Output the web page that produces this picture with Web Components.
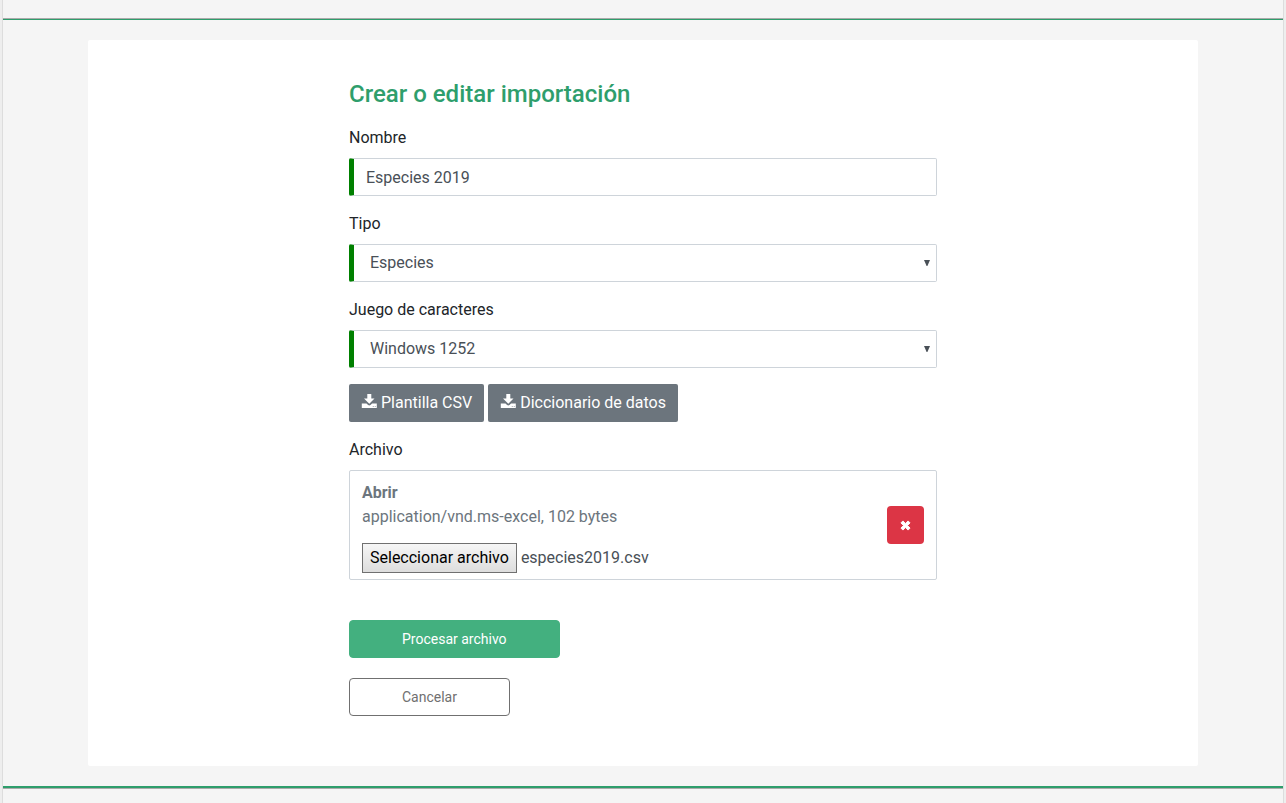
<!DOCTYPE html>
<html lang="es">
<head>
<meta charset="utf-8">
<meta name="viewport" content="width=device-width, initial-scale=1">
<title>Crear o editar importación</title>
<style>
  :root {
    --primary: #2e9e6c;
    --primary-button: #43b07f;
    --secondary: #6c757d;
    --danger: #dc3545;
    --border: #ced4da;
    --required: #008000;
    --text: #212529;
    --text-input: #495057;
  }
  body {
    margin: 0;
    background: #eeeeee;
    color: var(--text);
    font: 400 16px/24px Roboto, "Liberation Sans", sans-serif;
  }
</style>
</head>
<body>
<page-frame>
  <import-card heading="Crear o editar importación">
    <text-field label="Nombre" value="Especies 2019"></text-field>
    <select-field label="Tipo" options="Especies,Registros"></select-field>
    <select-field label="Juego de caracteres" options="Windows 1252,UTF-8"></select-field>
    <download-links>
      <download-link href="#plantilla">Plantilla CSV</download-link>
      <download-link href="#diccionario">Diccionario de datos</download-link>
    </download-links>
    <file-field label="Archivo" filename="especies2019.csv" info="application/vnd.ms-excel, 102 bytes"></file-field>
    <form-actions></form-actions>
  </import-card>
</page-frame>

<script>
const fieldStyles = `
  :host {
    display: block;
    margin-bottom: 16px;
  }
  label.title {
    display: block;
    margin-bottom: 8px;
  }
  input.control, select {
    display: block;
    box-sizing: border-box;
    width: 100%;
    height: 38px;
    padding: 6px 12px;
    border: 1px solid var(--border);
    border-left: 5px solid var(--required);
    border-radius: 2px;
    background: #fff;
    color: var(--text-input);
    font: inherit;
  }
  input.control:focus, select:focus {
    outline: none;
    border-color: var(--primary);
  }
`;

class PageFrame extends HTMLElement {
  constructor() {
    super();
    this.attachShadow({ mode: 'open' });
  }

  connectedCallback() {
    this.shadowRoot.innerHTML = `
      <style>
        :host {
          display: flex;
          flex-direction: column;
          box-sizing: border-box;
          min-height: 100vh;
          margin: 0 2px;
          border: solid #dddddd;
          border-width: 0 1px;
          background: #f5f5f5;
        }
        header {
          height: 18px;
          border-bottom: 1px solid #aaaaaa;
        }
        main {
          padding: 20px 0;
          border-top: 1px solid var(--primary);
          border-bottom: 2px solid var(--primary);
        }
        footer {
          flex: 1;
          min-height: 14px;
          border-top: 1px solid #aaaaaa;
        }
      </style>
      <header></header>
      <main><slot></slot></main>
      <footer></footer>
    `;
  }
}

class ImportCard extends HTMLElement {
  constructor() {
    super();
    this.attachShadow({ mode: 'open' });
  }

  connectedCallback() {
    this.shadowRoot.innerHTML = `
      <style>
        :host {
          display: block;
          box-sizing: border-box;
          max-width: 1110px;
          margin: 0 auto;
          padding: 40px 16px 50px;
          border-radius: 2px;
          background: #fff;
        }
        section {
          max-width: 588px;
          margin: 0 auto;
        }
        h1 {
          margin: 0 0 18px;
          color: var(--primary);
          font-size: 24px;
          font-weight: 500;
          line-height: 28px;
        }
      </style>
      <section>
        <h1>${this.getAttribute('heading')}</h1>
        <slot></slot>
      </section>
    `;
  }
}

class TextField extends HTMLElement {
  constructor() {
    super();
    this.attachShadow({ mode: 'open' });
  }

  connectedCallback() {
    this.shadowRoot.innerHTML = `
      <style>${fieldStyles}</style>
      <label class="title" for="control">${this.getAttribute('label')}</label>
      <input class="control" id="control" type="text" value="${this.getAttribute('value')}" required>
    `;
  }
}

class SelectField extends HTMLElement {
  constructor() {
    super();
    this.attachShadow({ mode: 'open' });
  }

  connectedCallback() {
    const options = this.getAttribute('options').split(',');

    this.shadowRoot.innerHTML = `
      <style>
        ${fieldStyles}
        .wrap {
          display: grid;
          align-items: center;
        }
        .wrap > * {
          grid-area: 1 / 1;
        }
        select {
          appearance: none;
          padding: 6px 16px;
        }
        svg {
          justify-self: end;
          margin-right: 7px;
          fill: var(--text-input);
          pointer-events: none;
        }
      </style>
      <label class="title" for="control">${this.getAttribute('label')}</label>
      <div class="wrap">
        <select id="control" required>
          ${options.map((o) => `<option>${o}</option>`).join('')}
        </select>
        <svg width="6" height="6" viewBox="0 0 6 6"><path d="M0 0h6L3.4 6h-.8z"/></svg>
      </div>
    `;
  }
}

class DownloadLinks extends HTMLElement {
  constructor() {
    super();
    this.attachShadow({ mode: 'open' });
  }

  connectedCallback() {
    this.shadowRoot.innerHTML = `
      <style>
        :host {
          display: flex;
          flex-wrap: wrap;
          gap: 4px;
          margin-bottom: 16px;
        }
      </style>
      <slot></slot>
    `;
  }
}

class DownloadLink extends HTMLElement {
  constructor() {
    super();
    this.attachShadow({ mode: 'open' });
  }

  connectedCallback() {
    this.shadowRoot.innerHTML = `
      <style>
        :host {
          display: block;
        }
        a {
          display: flex;
          align-items: center;
          gap: 4px;
          padding: 7px 12px;
          border-radius: 2px;
          background: var(--secondary);
          color: #fff;
          text-decoration: none;
        }
        a:hover {
          background: #5a6268;
        }
        svg {
          fill: currentColor;
        }
      </style>
      <a href="${this.getAttribute('href')}">
        <svg width="16" height="18" viewBox="0 0 16 18" aria-hidden="true">
          <path d="M6.300 0h4v4.500h3.200L8.300 9.700 3 4.500h3.300z"/>
          <path d="M.8 9.500h4.700l1.600 1.600q1.200.9 2.400 0l1.600-1.600h4.700V14H.8zM11.800 12v.8h.8V12zM13.800 12v.8h.8V12z" fill-rule="evenodd"/>
        </svg>
        <span><slot></slot></span>
      </a>
    `;
  }
}

class FileField extends HTMLElement {
  constructor() {
    super();
    this.attachShadow({ mode: 'open' });
  }

  connectedCallback() {
    this.shadowRoot.innerHTML = `
      <style>
        ${fieldStyles}
        .box {
          display: flex;
          align-items: center;
          justify-content: space-between;
          padding: 6px 12px;
          border: 1px solid var(--border);
          border-radius: 2px;
        }
        .info {
          margin: 4px 0 14px;
          color: var(--secondary);
        }
        .info a {
          display: block;
          color: inherit;
          font-weight: 700;
          text-decoration: none;
        }
        .picker {
          display: flex;
          align-items: center;
          gap: 4px;
          color: var(--text-input);
        }
        .picker input {
          width: 1px;
          height: 1px;
          margin: 0 -5px 0 0;
          opacity: 0;
        }
        .choose {
          padding: 2px 7px;
          border: 1px solid #707070;
          background: linear-gradient(#f6f6f6, #dddddd);
          color: #000;
        }
        input:focus-visible + .choose {
          outline: 2px solid var(--primary);
        }
        .remove {
          display: flex;
          align-items: center;
          justify-content: center;
          width: 37px;
          height: 38px;
          padding: 0;
          border: none;
          border-radius: 4px;
          background: var(--danger);
          color: #fff;
          cursor: pointer;
        }
        svg {
          fill: currentColor;
        }
      </style>
      <label class="title" for="file">${this.getAttribute('label')}</label>
      <div class="box">
        <div>
          <div class="info">
            <a href="#abrir">Abrir</a>
            <span>${this.getAttribute('info')}</span>
          </div>
          <div class="picker">
            <input id="file" type="file" accept=".csv">
            <label class="choose" for="file">Seleccionar archivo</label>
            <span id="filename">${this.getAttribute('filename')}</span>
          </div>
        </div>
        <button class="remove" type="button" aria-label="Quitar archivo">
          <svg width="11" height="11" viewBox="0 0 12 12">
            <path d="M3.2 1 6 3.8 8.8 1 11 3.2 8.2 6 11 8.8 8.8 11 6 8.2 3.2 11 1 8.8 3.8 6 1 3.2z" stroke="currentColor" stroke-linejoin="round"/>
          </svg>
        </button>
      </div>
    `;

    const file = this.shadowRoot.getElementById('file');
    const filename = this.shadowRoot.getElementById('filename');

    file.addEventListener('change', () => {
      if (file.files.length) filename.textContent = file.files[0].name;
    });

    this.shadowRoot.querySelector('.remove').addEventListener('click', () => {
      file.value = '';
      filename.textContent = '';
    });
  }
}

class FormActions extends HTMLElement {
  constructor() {
    super();
    this.attachShadow({ mode: 'open' });
  }

  connectedCallback() {
    this.shadowRoot.innerHTML = `
      <style>
        :host {
          display: flex;
          flex-direction: column;
          align-items: flex-start;
          gap: 20px;
          margin-top: 40px;
        }
        button {
          height: 38px;
          padding: 0 52px;
          border: 1px solid var(--primary-button);
          border-radius: 4px;
          background: var(--primary-button);
          color: #fff;
          font: inherit;
          font-size: 14px;
          cursor: pointer;
        }
        button.cancel {
          border-color: #707070;
          background: #fff;
          color: #707070;
        }
      </style>
      <button type="submit">Procesar archivo</button>
      <button class="cancel" type="button">Cancelar</button>
    `;
  }
}

customElements.define('page-frame', PageFrame);
customElements.define('import-card', ImportCard);
customElements.define('text-field', TextField);
customElements.define('select-field', SelectField);
customElements.define('download-links', DownloadLinks);
customElements.define('download-link', DownloadLink);
customElements.define('file-field', FileField);
customElements.define('form-actions', FormActions);
</script>
</body>
</html>
